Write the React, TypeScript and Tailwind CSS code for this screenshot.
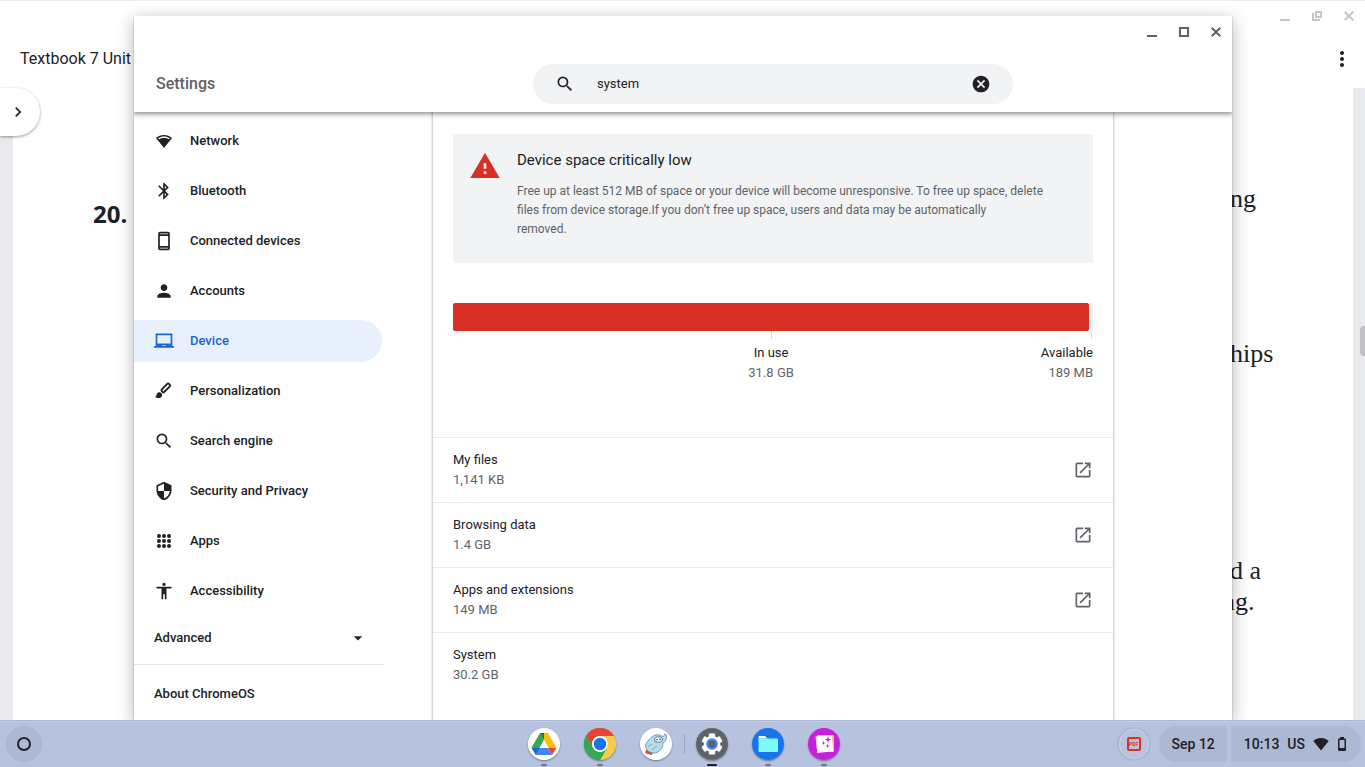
import { useState } from "react";
import type { ReactNode } from "react";
import clsx from "clsx";
import {
  MdAccessibility,
  MdArrowDropDown,
  MdBluetooth,
  MdCancel,
  MdChevronRight,
  MdLaptopChromebook,
  MdMoreVert,
  MdOpenInNew,
  MdPerson,
  MdSearch,
  MdSecurity,
  MdWarning,
} from "react-icons/md";

function NetworkIcon() {
  return (
    <svg viewBox="0 0 20 20" className="size-5" fill="currentColor">
      <path
        fillRule="evenodd"
        d="M10 17 2 7.1C4.2 5 7 4 10 4s5.800 1 8 3.100L10 17ZM4.200 7.300l.8 1C6.500 7.400 8.200 7 10 7s3.500.4 5 1.300l.8-1C14.100 6.100 12.100 5.500 10 5.500s-4.100.6-5.800 1.800Z"
      />
    </svg>
  );
}

function PhoneIcon() {
  return (
    <svg viewBox="0 0 24 24" className="size-5" fill="currentColor">
      <path
        fillRule="evenodd"
        d="M7 1h10a2 2 0 0 1 2 2v18a2 2 0 0 1-2 2H7a2 2 0 0 1-2-2V3a2 2 0 0 1 2-2Zm0 5v12h10V6H7Zm0-3v1h10V3H7Zm0 17v1h10v-1H7Z"
      />
    </svg>
  );
}

function BrushIcon() {
  return (
    <svg viewBox="0 0 20 20" className="size-5">
      <rect
        x="6.700"
        y="5.100"
        width="10.200"
        height="3.600"
        rx="1.200"
        fill="none"
        stroke="currentColor"
        strokeWidth="1.900"
        transform="rotate(-46 11.800 6.900)"
      />
      <path
        d="M5.300 11.200c1.600 0 2.800 1.200 2.800 2.800 0 1.900-1.500 3.100-3.500 3.100-1.500 0-2.900-.5-3.700-1.400 1 0 1.700-.7 1.700-1.700 0-1.600 1.100-2.800 2.700-2.800Z"
        fill="currentColor"
      />
    </svg>
  );
}

function AppsIcon() {
  const stops = [5, 10, 15];
  return (
    <svg viewBox="0 0 20 20" className="size-5" fill="currentColor">
      {stops.map((y) =>
        stops.map((x) => <circle key={`${x}-${y}`} cx={x} cy={y} r="2" />)
      )}
    </svg>
  );
}

function DriveLogo() {
  return (
    <svg viewBox="0 0 32 32" className="size-8">
      <circle cx="16" cy="16" r="16" fill="#fff" />
      <path d="M12 5h8l-4 7Z" fill="#188038" />
      <path d="M12 5 3.600 19.500 8 27l8-15Z" fill="#34a853" />
      <path d="M20 5h-8l8.500 15h8Z" fill="#fbbc04" />
      <path d="M12 5h4v7l-4-7Z" fill="#188038" />
      <path d="M8 27h16l-4-7h-8Z" fill="#4285f4" />
      <path d="M3.600 20H12l-4 7Z" fill="#1967d2" />
      <path d="M28.400 20H20l4 7Z" fill="#ea4335" />
      <path d="M16 12l4.500 8h-9Z" fill="#fff" />
    </svg>
  );
}

function ChromeLogo() {
  return (
    <svg viewBox="0 0 32 32" className="size-8">
      <circle cx="16" cy="16" r="16" fill="#34a853" />
      <path d="M2.140 8A16 16 0 0 1 29.860 8H16a8 8 0 0 0-6.930 12Z" fill="#ea4335" />
      <path d="M29.860 8A16 16 0 0 1 16 32l6.930-12A8 8 0 0 0 16 8Z" fill="#fbcb43" />
      <path d="M2.140 8 9.070 20A8 8 0 0 0 22.930 20L16 32A16 16 0 0 1 2.140 8Z" fill="#34a853" />
      <circle cx="16" cy="16" r="8" fill="#fff" />
      <circle cx="16" cy="16" r="6.200" fill="#1a73e8" />
    </svg>
  );
}

function RocketLogo() {
  return (
    <svg viewBox="0 0 32 32" className="size-8">
      <circle cx="16" cy="16" r="16" fill="#fff" />
      <path d="m6 22-1 3 3 1 4 1 1-4Z" fill="#d84a35" />
      <path
        d="M7 22c-2-3-2-6 1-9 3-4 7-7 11-6 2 0 3 1 4 2l2-3 1.500 1c.5 3-.5 6-3.500 8 0 4-2 7-5 9-4 2-8 1-11-2Z"
        fill="#b4dcec"
        stroke="#5a86a3"
        strokeWidth=".8"
      />
      <path d="m8 19 4-3M12 22l5-4" stroke="#6699b5" strokeWidth=".8" fill="none" />
      <ellipse cx="18.500" cy="11.500" rx="4" ry="2.700" fill="#fff" stroke="#3f5870" strokeWidth=".8" transform="rotate(-8 18.500 11.500)" />
      <circle cx="17" cy="11.800" r=".8" fill="#25394c" />
      <circle cx="20" cy="11.400" r=".8" fill="#25394c" />
    </svg>
  );
}

function SettingsLogo() {
  return (
    <svg viewBox="0 0 32 32" className="size-8">
      <circle cx="16" cy="16" r="16" fill="#5f6368" />
      {[0, 60, 120].map((angle) => (
        <rect
          key={angle}
          x="12.800"
          y="5.500"
          width="6.400"
          height="21"
          rx="1.200"
          fill="#fff"
          transform={`rotate(${angle} 16 16)`}
        />
      ))}
      <circle cx="16" cy="16" r="8.200" fill="#fff" />
      <circle cx="16" cy="16" r="5.800" fill="#4285f4" />
      <circle cx="16" cy="16" r="3.500" fill="#5f6368" />
    </svg>
  );
}

function FilesLogo() {
  return (
    <svg viewBox="0 0 32 32" className="size-8">
      <circle cx="16" cy="16" r="16" fill="#1a73e8" />
      <path d="M6.500 9a1 1 0 0 1 1-1H13l2.500 2.500h-9Z" fill="#fff" />
      <path d="M6.500 10.500H25a1 1 0 0 1 1 1V23a1 1 0 0 1-1 1H7.500a1 1 0 0 1-1-1Z" fill="#7dfbfa" />
    </svg>
  );
}

function GalleryLogo() {
  return (
    <svg viewBox="0 0 32 32" className="size-8">
      <circle cx="16" cy="16" r="16" fill="#c81fdb" />
      <rect x="9" y="7" width="17" height="17" rx="1" fill="#f6b6a4" />
      <path d="m7.500 8.500 16-1.200 1.800 16-16 1.700Z" fill="#fff" />
      <path
        d="m20 8.500.9 2.200 2.200.9-2.200.9-.9 2.200-.9-2.200-2.200-.9 2.200-.9ZM15.500 13l.6 1.400 1.400.6-1.400.6-.6 1.400-.6-1.400-1.400-.6 1.400-.6ZM19.500 16l.6 1.400 1.400.6-1.400.6-.6 1.400-.6-1.400-1.400-.6 1.400-.6Z"
        fill="#c81fdb"
      />
    </svg>
  );
}

function WindowControls({ restore }: { restore?: boolean }) {
  return (
    <div
      className={clsx(
        "flex h-8 justify-end",
        restore ? "text-[#c4c6c9]" : "text-[#5f6368]"
      )}
    >
      <button type="button" aria-label="Minimize" className="flex size-8 items-center justify-center">
        <svg viewBox="0 0 10 10" className="size-[10px]">
          <path d="M0 8h10v2H0z" fill="currentColor" />
        </svg>
      </button>
      <button type="button" aria-label="Maximize" className="flex size-8 items-center justify-center">
        <svg viewBox="0 0 10 10" className="size-[10px]" fill="none" stroke="currentColor" strokeWidth="2">
          {restore ? (
            <>
              <path d="M4 1h5v5H4z" />
              <path d="M1 2v7h7" />
            </>
          ) : (
            <path d="M1 1h8v8H1z" />
          )}
        </svg>
      </button>
      <button type="button" aria-label="Close" className="flex size-8 items-center justify-center">
        <svg viewBox="0 0 10 10" className="size-[10px]" stroke="currentColor" strokeWidth="2">
          <path d="m.7.7 8.600 8.600M9.300.7.7 9.300" />
        </svg>
      </button>
    </div>
  );
}

const menuItems: { title: string; icon: ReactNode; active?: boolean }[] = [
  { title: "Network", icon: <NetworkIcon /> },
  { title: "Bluetooth", icon: <MdBluetooth /> },
  { title: "Connected devices", icon: <PhoneIcon /> },
  { title: "Accounts", icon: <MdPerson /> },
  { title: "Device", icon: <MdLaptopChromebook />, active: true },
  { title: "Personalization", icon: <BrushIcon /> },
  { title: "Search engine", icon: <MdSearch /> },
  { title: "Security and Privacy", icon: <MdSecurity /> },
  { title: "Apps", icon: <AppsIcon /> },
  { title: "Accessibility", icon: <MdAccessibility /> },
];

const storageRows = [
  { title: "My files", size: "1,141 KB", link: true },
  { title: "Browsing data", size: "1.4 GB", link: true },
  { title: "Apps and extensions", size: "149 MB", link: true },
  { title: "System", size: "30.2 GB", link: false },
];

const usedPercent = 99.4;

const shelfApps = [
  { title: "Drive", icon: <DriveLogo />, running: true },
  { title: "Chrome", icon: <ChromeLogo />, running: true },
  { title: "Rocket", icon: <RocketLogo />, running: false },
];

const openApps = [
  { title: "Settings", icon: <SettingsLogo />, running: true, active: true },
  { title: "Files", icon: <FilesLogo />, running: true },
  { title: "Gallery", icon: <GalleryLogo />, running: true },
];

function Sidebar() {
  return (
    <nav className="w-[250px] pt-2 text-[13px] font-medium">
      <ul className="space-y-2">
        {menuItems.map((e) => (
          <li key={e.title}>
            <a
              href="#"
              className={clsx(
                "mr-[2px] flex h-[42px] items-center gap-4 rounded-r-full pl-5",
                e.active && "bg-[#e8f0fe] text-[#1967d2]"
              )}
            >
              <span className="text-xl">{e.icon}</span>
              {e.title}
            </a>
          </li>
        ))}
      </ul>
      <button
        type="button"
        className="flex h-[52px] w-full items-center justify-between pr-4 pl-5"
      >
        Advanced
        <MdArrowDropDown className="text-xl" />
      </button>
      <div className="border-t border-[#e4e4e4] pt-2">
        <a href="#" className="flex h-[42px] items-center pl-5">
          About ChromeOS
        </a>
      </div>
    </nav>
  );
}

function StoragePage() {
  return (
    <main className="pt-[22px] text-[13px] leading-5 shadow-[0_0_2px_1px_rgba(60,64,67,0.3)]">
      <section className="mx-5 flex gap-4 bg-[#f1f3f4] px-4 pt-4 pb-6">
        <MdWarning className="shrink-0 text-[32px] text-[#d93025]" />
        <div className="pr-7">
          <h2 className="text-[15px] leading-5">Device space critically low</h2>
          <p className="mt-3 text-xs leading-[19px] text-[#5f6368]">
            Free up at least 512 MB of space or your device will become
            unresponsive. To free up space, delete files from device storage.If
            you don’t free up space, users and data may be automatically
            <br />
            removed.
          </p>
        </div>
      </section>

      <section className="mx-5 mt-10 flex">
        <div
          className="flex shrink-0 flex-col items-center"
          style={{ width: `${usedPercent}%` }}
        >
          <div className="h-7 w-full rounded-[2px] bg-[#d93025]" />
          <div className="h-2 w-px bg-[#dadce0]" />
          <span className="mt-1">In use</span>
          <span className="text-[#5f6368]">31.8 GB</span>
        </div>
        <div className="flex min-w-0 flex-1 flex-col items-end whitespace-nowrap">
          <div className="h-7 w-full bg-[#f1f1f1]" />
          <div className="mr-px h-2 w-px bg-[#dadce0]" />
          <span className="mt-1">Available</span>
          <span className="text-[#5f6368]">189 MB</span>
        </div>
      </section>

      <ul className="mt-[54px]">
        {storageRows.map((e) => (
          <li
            key={e.title}
            className="flex h-[65px] items-center justify-between border-t border-[#ebebeb] px-5"
          >
            <div>
              <div>{e.title}</div>
              <div className="text-[#5f6368]">{e.size}</div>
            </div>
            {e.link && (
              <button type="button" aria-label={e.title}>
                <MdOpenInNew className="text-xl text-[#5f6368]" />
              </button>
            )}
          </li>
        ))}
      </ul>
    </main>
  );
}

function SettingsWindow() {
  const [query, setQuery] = useState("system");

  return (
    <div className="absolute top-4 right-[133px] bottom-0 left-[134px] z-10 flex flex-col bg-white shadow-[0_1px_0_1px_rgba(0,0,0,0.08),0_4px_16px_rgba(0,0,0,0.3)]">
      <header className="z-10 shadow-[0_1px_5px_1px_rgba(0,0,0,0.45)] [clip-path:inset(0_0_-8px_0)]">
        <WindowControls />
        <div className="mt-2 grid h-14 grid-cols-[299px_minmax(0,680px)_1fr] items-center">
          <h1 className="pl-[22px] text-base font-medium text-[#5f6368]">
            Settings
          </h1>
          <div className="mx-auto flex h-10 w-full max-w-[480px] items-center rounded-full bg-[#f1f3f4] px-[22px]">
            <MdSearch className="shrink-0 text-xl" />
            <input
              type="text"
              aria-label="Search settings"
              value={query}
              onChange={(e) => setQuery(e.target.value)}
              className="mx-[22px] min-w-0 grow bg-transparent text-[13px] outline-none"
            />
            <button type="button" aria-label="Clear search" onClick={() => setQuery("")}>
              <MdCancel className="text-xl" />
            </button>
          </div>
        </div>
      </header>
      <div className="grid min-h-0 flex-1 grid-cols-[299px_minmax(0,680px)_1fr] overflow-hidden">
        <Sidebar />
        <StoragePage />
      </div>
    </div>
  );
}

function TextbookWindow() {
  return (
    <div className="flex h-full flex-col bg-white shadow-[inset_0_1px_0_#eee]">
      <WindowControls restore />
      <div className="flex h-14 shrink-0 items-center justify-between pr-[11px] pb-[2px] pl-5">
        <h2 className="text-base">Textbook 7 Unit</h2>
        <button type="button" aria-label="More">
          <MdMoreVert className="text-2xl" />
        </button>
      </div>
      <div className="flex min-h-0 flex-1 bg-[#e8eaed] pr-3 pl-[13px]">
        <div className="flex flex-1 justify-between overflow-hidden bg-white">
          <p className="mt-[108px] ml-20 font-['Open_Sans',sans-serif] text-2xl leading-9 font-bold">
            20.
          </p>
          <div className="w-[123px] font-['Liberation_Serif',serif] text-[26px] leading-[31px] whitespace-nowrap">
            <p className="mt-[95px]">ng</p>
            <p className="mt-[124px]">hips</p>
            <p className="mt-[186px]">d a</p>
            <p className="-ml-2">ng.</p>
          </div>
        </div>
      </div>
      <button
        type="button"
        aria-label="Expand"
        className="absolute top-[88px] left-0 flex h-12 w-10 items-center rounded-r-full bg-white pl-2 shadow-[0_1px_3px_rgba(0,0,0,0.4)]"
      >
        <MdChevronRight className="text-xl" />
      </button>
      <div className="absolute top-[326px] right-0 h-[30px] w-[5px] rounded-l bg-[#c1c1c4]" />
    </div>
  );
}

function ShelfApp({
  title,
  icon,
  running,
  active,
}: {
  title: string;
  icon: ReactNode;
  running: boolean;
  active?: boolean;
}) {
  return (
    <button type="button" aria-label={title} className="flex flex-col items-center gap-1">
      <span className="rounded-full shadow-[0_1px_2px_rgba(0,0,0,0.4)]">
        {icon}
      </span>
      {running && (
        <span
          className={clsx(
            "h-[2px] rounded-full",
            active ? "w-[10px] bg-[#202124]" : "w-[6px] bg-[#6c7385]"
          )}
        />
      )}
    </button>
  );
}

function Shelf() {
  return (
    <footer className="z-20 grid h-[47px] shrink-0 grid-cols-[1fr_auto_1fr] border-t border-[#a9b6d6] bg-[#b7c2df] shadow-[inset_0_1px_0_#c5cee6]">
      <div className="flex items-center pl-[6px]">
        <button
          type="button"
          aria-label="Launcher"
          className="flex size-9 items-center justify-center rounded-full bg-[#adb8d2]"
        >
          <span className="size-[14px] rounded-full border-2 border-[#202124]" />
        </button>
      </div>
      <div className="flex gap-6 pt-[7px] pl-[3px]">
        {shelfApps.map((e) => (
          <ShelfApp key={e.title} {...e} />
        ))}
        <div className="-mr-[13px] -ml-3 mt-[6px] h-5 w-px bg-[#9aa5c0]" />
        {openApps.map((e) => (
          <ShelfApp key={e.title} {...e} />
        ))}
      </div>
      <div className="flex items-center justify-end gap-1 pr-1 text-sm font-medium">
        <button
          type="button"
          aria-label="PDF"
          className="mr-1 flex size-[34px] items-center justify-center rounded-full border-2 border-[#adb8d2] shadow-[inset_0_0_1px_1px_rgba(255,255,255,0.3)]"
        >
          <span className="flex size-[14px] items-center justify-center rounded-[2px] border-2 border-[#d93025] text-[5px] leading-none font-bold text-[#d93025]">
            PDF
          </span>
        </button>
        <button type="button" className="h-9 rounded-l-full rounded-r bg-[#adb8d2] pr-3 pl-[13px]">
          Sep 12
        </button>
        <button
          type="button"
          className="flex h-9 items-center gap-2 rounded-l rounded-r-full bg-[#adb8d2] pr-[14px] pl-[13px]"
        >
          <span>10:13</span>
          <span>US</span>
          <svg viewBox="0 0 16 14" className="h-[14px] w-4" fill="currentColor">
            <path d="M8 13.500.3 4C2.400 2 5 1 8 1s5.600 1 7.700 3Z" />
          </svg>
          <svg viewBox="0 0 10 14" className="h-[14px] w-[10px]">
            <path
              fillRule="evenodd"
              d="M3 0h4v1.500h1A1 1 0 0 1 9 2.500V13a1 1 0 0 1-1 1H2a1 1 0 0 1-1-1V2.500a1 1 0 0 1 1-1h1ZM2.500 3v8h5V3Z"
              fill="currentColor"
            />
          </svg>
        </button>
      </div>
    </footer>
  );
}

export default function App() {
  return (
    <div className="flex h-screen flex-col overflow-hidden bg-white font-[Roboto,sans-serif] text-[#202124]">
      <div className="relative min-h-0 flex-1">
        <TextbookWindow />
        <SettingsWindow />
      </div>
      <Shelf />
    </div>
  );
}
